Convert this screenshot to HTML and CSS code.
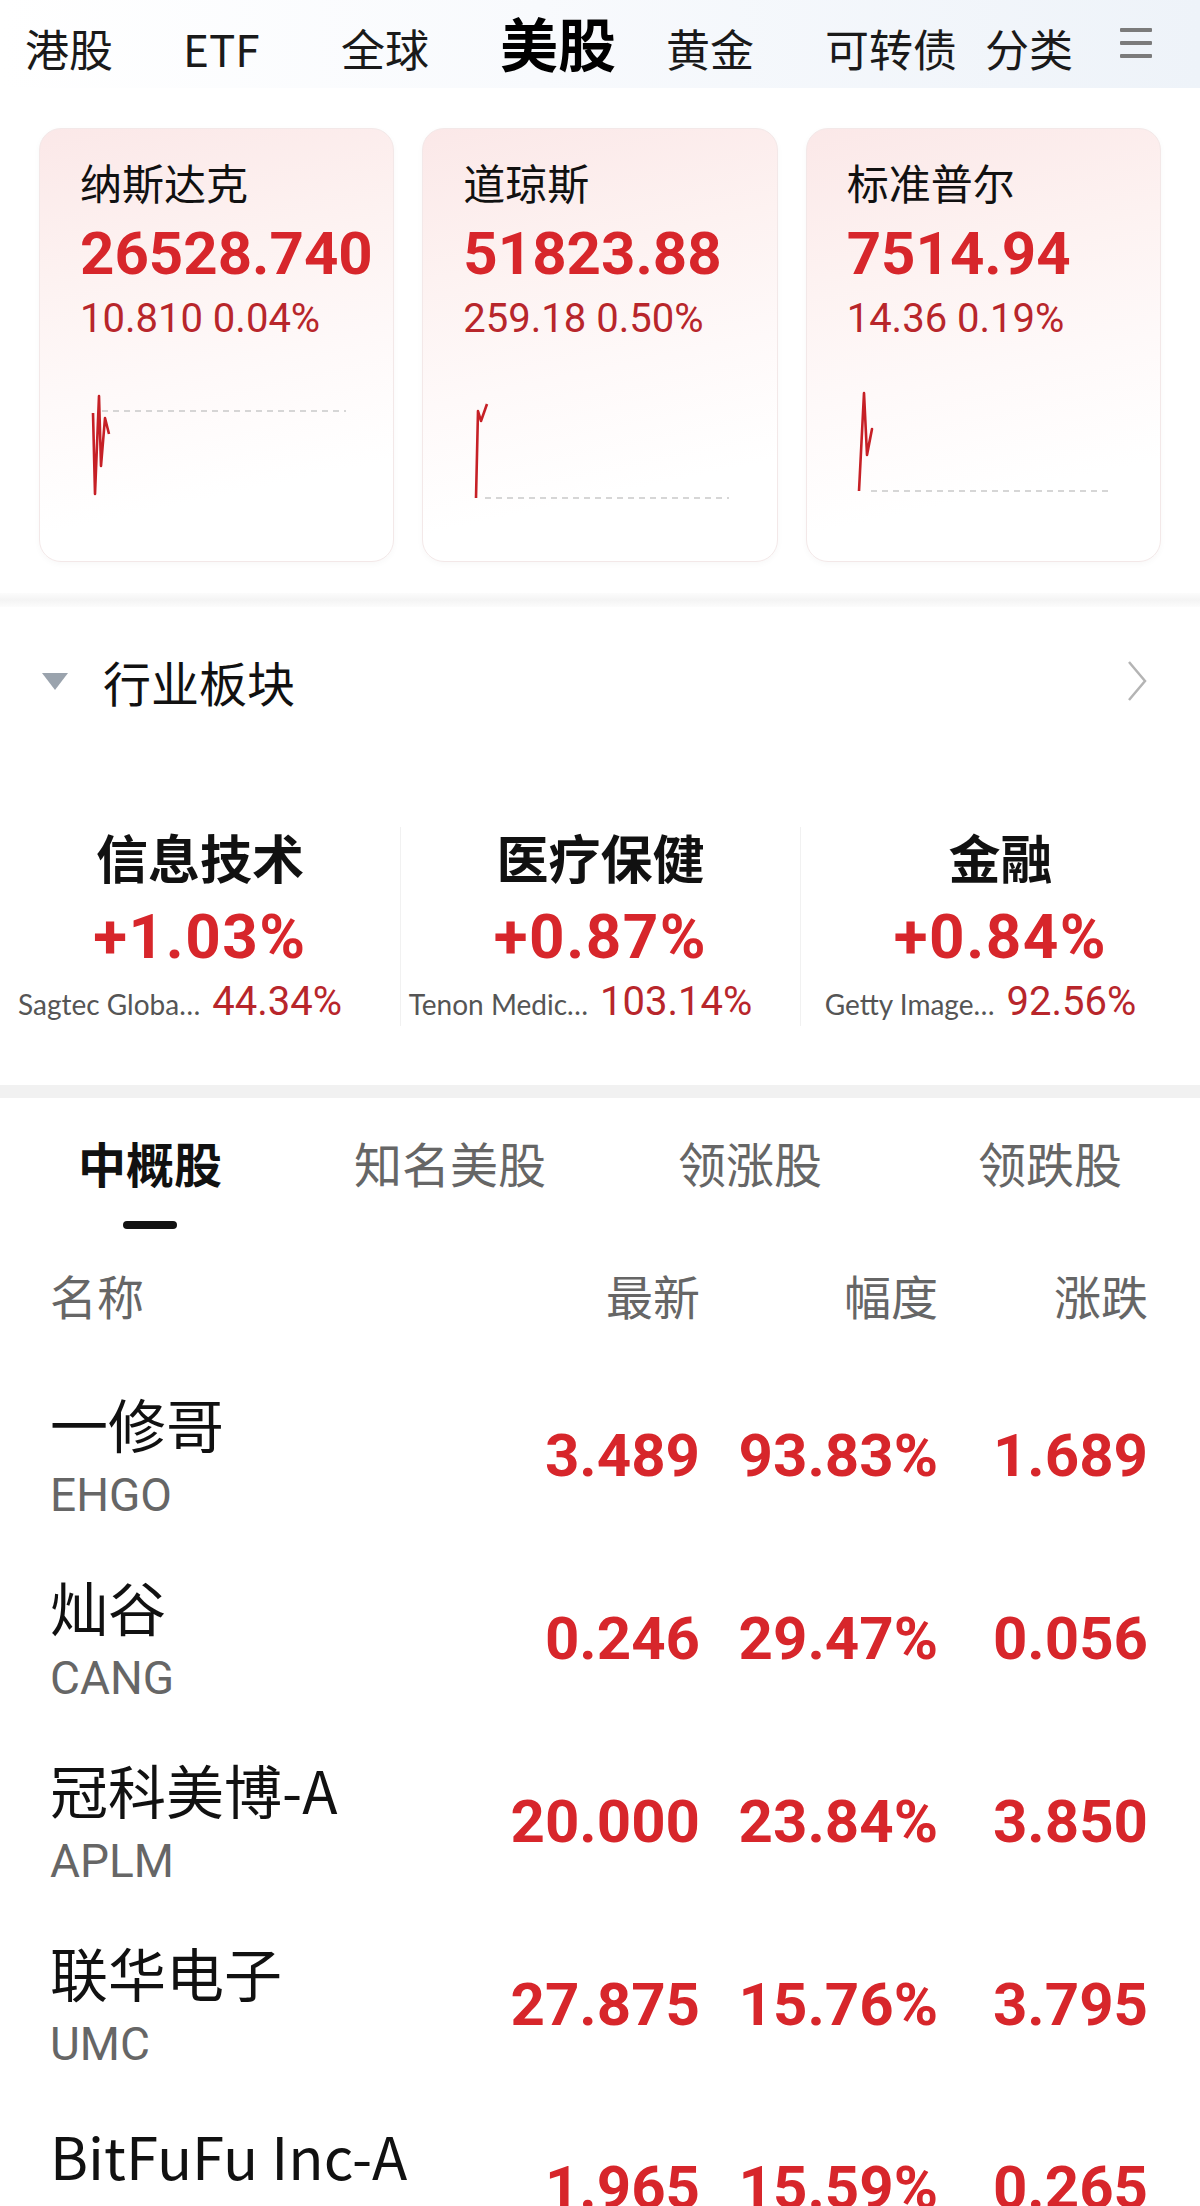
FILE: index.html
```html
<!DOCTYPE html>
<html lang="zh-CN">
<head>
    <meta charset="UTF-8">
    <meta name="viewport" content="width=device-width, initial-scale=1.0">
    <title>美股行情</title>
    <link rel="stylesheet" href="styles.css">
</head>
<body>
    <nav class="topnav">
        <a class="nav-item">港股</a>
        <a class="nav-item">ETF</a>
        <a class="nav-item">全球</a>
        <a class="nav-item active">美股</a>
        <a class="nav-item">黄金</a>
        <a class="nav-item">可转债</a>
        <a class="nav-item">分类</a>
        <div class="menu-icon"><span></span><span></span><span></span></div>
    </nav>

    <section class="index-cards">
        <div class="card">
            <div class="card-title">纳斯达克</div>
            <div class="card-price">26528.740</div>
            <div class="card-change">10.810&nbsp;0.04%</div>
            <svg class="spark" viewBox="0 0 260 112" width="260" height="112">
                <line class="base" x1="10" y1="22" x2="254" y2="22"/>
                <polyline points="1,24 3,105 7,7 9,77 13,29 17,45"/>
            </svg>
        </div>
        <div class="card">
            <div class="card-title">道琼斯</div>
            <div class="card-price">51823.88</div>
            <div class="card-change">259.18&nbsp;0.50%</div>
            <svg class="spark" viewBox="0 0 260 112" width="260" height="112">
                <line class="base" x1="10" y1="109" x2="254" y2="109"/>
                <polyline points="1,109 3,22 6,32 12,15"/>
            </svg>
        </div>
        <div class="card">
            <div class="card-title">标准普尔</div>
            <div class="card-price">7514.94</div>
            <div class="card-change">14.36&nbsp;0.19%</div>
            <svg class="spark" viewBox="0 0 260 112" width="260" height="112">
                <line class="base" x1="12" y1="102" x2="254" y2="102"/>
                <polyline points="0,102 5,4 8,66 13,40 10,55"/>
            </svg>
        </div>
    </section>

    <div class="band band-soft"></div>

    <section class="sectors">
        <div class="section-head">
            <span class="caret"></span>
            <h2>行业板块</h2>
            <svg class="chevron" viewBox="0 0 22 42" width="22" height="42">
                <polyline points="3,2 19,21 3,40"/>
            </svg>
        </div>
        <div class="sector-grid">
            <div class="sector">
                <div class="sector-name">信息技术</div>
                <div class="sector-pct">+1.03%</div>
                <div class="sector-lead"><span class="lead-name">Sagtec Globa…</span><span class="lead-pct">44.34%</span></div>
            </div>
            <div class="sector">
                <div class="sector-name">医疗保健</div>
                <div class="sector-pct">+0.87%</div>
                <div class="sector-lead"><span class="lead-name">Tenon Medic…</span><span class="lead-pct">103.14%</span></div>
            </div>
            <div class="sector">
                <div class="sector-name">金融</div>
                <div class="sector-pct">+0.84%</div>
                <div class="sector-lead"><span class="lead-name">Getty Image…</span><span class="lead-pct">92.56%</span></div>
            </div>
        </div>
    </section>

    <div class="band"></div>

    <section class="stock-list">
        <div class="tabs">
            <div class="tab active">中概股<span class="tab-bar"></span></div>
            <div class="tab">知名美股</div>
            <div class="tab">领涨股</div>
            <div class="tab">领跌股</div>
        </div>

        <div class="list-row list-head">
            <div>名称</div>
            <div class="num">最新</div>
            <div class="num">幅度</div>
            <div class="num">涨跌</div>
        </div>

        <div class="list-row stock">
            <div class="stock-name"><div class="cn">一修哥</div><div class="code">EHGO</div></div>
            <div class="num val">3.489</div>
            <div class="num val">93.83%</div>
            <div class="num val">1.689</div>
        </div>
        <div class="list-row stock">
            <div class="stock-name"><div class="cn">灿谷</div><div class="code">CANG</div></div>
            <div class="num val">0.246</div>
            <div class="num val">29.47%</div>
            <div class="num val">0.056</div>
        </div>
        <div class="list-row stock">
            <div class="stock-name"><div class="cn">冠科美博-A</div><div class="code">APLM</div></div>
            <div class="num val">20.000</div>
            <div class="num val">23.84%</div>
            <div class="num val">3.850</div>
        </div>
        <div class="list-row stock">
            <div class="stock-name"><div class="cn">联华电子</div><div class="code">UMC</div></div>
            <div class="num val">27.875</div>
            <div class="num val">15.76%</div>
            <div class="num val">3.795</div>
        </div>
        <div class="list-row stock">
            <div class="stock-name"><div class="cn">BitFuFu Inc-A</div><div class="code">FUFU</div></div>
            <div class="num val">1.965</div>
            <div class="num val">15.59%</div>
            <div class="num val">0.265</div>
        </div>
    </section>
</body>
</html>
```

FILE: styles.css
```css
body {
    margin: 0;
    padding: 0;
    background: #fff;
    font-family: "Noto Sans CJK SC", "Noto Sans", sans-serif;
    color: #111;
}

/* top tabs */
.topnav {
    height: 88px;
    box-sizing: border-box;
    padding: 13px 0 0 25px;
    display: grid;
    grid-template-columns: 158px 158px 159px 166px 159px 160px 135px auto;
    align-items: baseline;
    background: linear-gradient(90deg, #ffffff 0%, #f8fafd 45%, #eef3f9 100%);
}

.nav-item {
    font-size: 44px;
    line-height: 1;
    color: #1a1a1a;
    white-space: nowrap;
}

.nav-item.active {
    font-size: 58px;
    font-weight: 700;
    color: #000;
}

.menu-icon {
    align-self: start;
    margin-top: 15px;
    width: 32px;
    display: flex;
    flex-direction: column;
    gap: 9px;
}

.menu-icon span {
    display: block;
    height: 4px;
    border-radius: 1px;
    background: #7b7b7b;
}

/* index cards */
.index-cards {
    display: grid;
    grid-template-columns: repeat(3, 1fr);
    gap: 28px;
    padding: 40px 39px 31px;
}

.card {
    height: 434px;
    box-sizing: border-box;
    padding: 28px 0 0 40px;
    border: 1px solid #f3e8e8;
    border-radius: 22px;
    background: linear-gradient(168deg, #fbe8e8 0%, #fdf2f1 30%, #fef9f9 55%, #ffffff 80%);
    box-shadow: 0 2px 6px rgba(0, 0, 0, 0.03);
}

.card-title {
    font-size: 42px;
    line-height: 50px;
    color: #111;
}

.card-price {
    margin-top: 12px;
    font-family: Roboto, sans-serif;
    font-weight: 700;
    font-size: 60px;
    line-height: 70px;
    color: #d7262b;
}

.card-change {
    margin-top: 6px;
    font-family: Roboto, sans-serif;
    font-size: 40px;
    line-height: 48px;
    color: #b8262b;
}

.spark {
    display: block;
    margin: 46px 0 0 12px;
    overflow: visible;
}

.spark .base {
    stroke: #c9c9c9;
    stroke-width: 1.5;
    stroke-dasharray: 6 5;
}

.spark polyline {
    fill: none;
    stroke: #c62026;
    stroke-width: 2.6;
    stroke-linejoin: round;
}

/* separators */
.band {
    height: 13px;
    background: #f1f1f1;
}

.band-soft {
    height: 14px;
    background: linear-gradient(#fcfcfc, #f4f4f4, #fcfcfc);
}

/* sectors */
.sectors {
    padding: 46px 0 59px;
}

.section-head {
    display: flex;
    align-items: center;
    padding: 0 52px 0 42px;
}

.caret {
    width: 0;
    height: 0;
    border-left: 13px solid transparent;
    border-right: 13px solid transparent;
    border-top: 17px solid #9aa3ad;
}

.section-head h2 {
    margin: 0 0 0 35px;
    font-size: 48px;
    line-height: 56px;
    font-weight: 400;
    color: #111;
}

.chevron {
    margin-left: auto;
}

.chevron polyline {
    fill: none;
    stroke: #b4b4b4;
    stroke-width: 2.5;
}

.sector-grid {
    display: grid;
    grid-template-columns: repeat(3, 1fr);
    margin-top: 118px;
}

.sector {
    text-align: center;
    border-left: 1px solid #f1f1f1;
}

.sector:first-child {
    border-left: none;
}

.sector-name {
    font-size: 52px;
    line-height: 60px;
    font-weight: 700;
    color: #111;
}

.sector-pct {
    margin-top: 17px;
    font-family: Roboto, sans-serif;
    font-weight: 700;
    font-size: 62px;
    line-height: 66px;
    letter-spacing: 1.5px;
    color: #d7262b;
}

.sector-lead {
    margin-top: 10px;
    padding-right: 40px;
    display: flex;
    justify-content: center;
    align-items: baseline;
    gap: 12px;
    line-height: 44px;
}

.lead-name {
    font-family: Lato, sans-serif;
    font-size: 28px;
    color: #555;
}

.lead-pct {
    font-family: Roboto, sans-serif;
    font-size: 40px;
    color: #b8262b;
}

/* stock list */
.stock-list {
    padding-top: 35px;
}

.tabs {
    display: grid;
    grid-template-columns: repeat(4, 300px);
    align-items: start;
}

.tab {
    text-align: center;
    font-size: 48px;
    line-height: 58px;
    color: #666;
}

.tab.active {
    font-weight: 700;
    color: #111;
}

.tab-bar {
    display: block;
    width: 54px;
    height: 8px;
    margin: 30px auto 0;
    border-radius: 4px;
    background: #111;
}

.list-row {
    display: grid;
    grid-template-columns: 1fr 220px 238px 210px;
    align-items: center;
    padding: 0 52px 0 50px;
}

.list-head {
    margin: 38px 0 41px;
    font-size: 47px;
    line-height: 56px;
    color: #666;
}

.num {
    text-align: right;
}

.stock {
    padding-top: 26px;
    padding-bottom: 26px;
}

.stock-name .cn {
    font-size: 58px;
    line-height: 66px;
    color: #111;
    white-space: nowrap;
}

.stock-name .code {
    margin-top: 13px;
    font-family: Roboto, sans-serif;
    font-size: 46px;
    line-height: 52px;
    color: #666;
}

.val {
    font-family: Roboto, sans-serif;
    font-weight: 700;
    font-size: 60px;
    line-height: 66px;
    color: #d7262b;
}
```
